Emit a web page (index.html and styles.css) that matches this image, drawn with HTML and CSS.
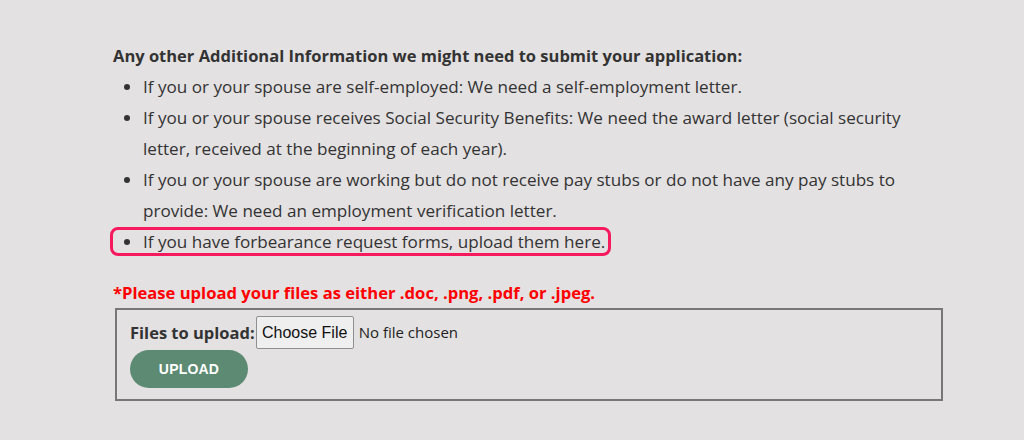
FILE: index.html
```html
<!DOCTYPE html>
<html lang="en">
<head>
<meta charset="utf-8">
<title>Additional Information</title>
<link rel="stylesheet" href="styles.css">
</head>
<body>
<main class="page">
  <p class="heading">Any other Additional Information we might need to submit your application:</p>
  <ul class="list">
    <li>If you or your spouse are self-employed: We need a self-employment letter.</li>
    <li>If you or your spouse receives Social Security Benefits: We need the award letter (social security letter, received at the beginning of each year).</li>
    <li>If you or your spouse are working but do not receive pay stubs or do not have any pay stubs to provide: We need an employment verification letter.</li>
    <li class="highlight">If you have forbearance request forms, upload them here.</li>
  </ul>
  <p class="notice">*Please upload your files as either .doc, .png, .pdf, or .jpeg.</p>
  <form class="upload-box">
    <div class="file-row">
      <span class="file-label">Files to upload:</span>
      <span class="file-btn">Choose File</span>
      <span class="file-status">No file chosen</span>
    </div>
    <button type="button" class="upload-btn">UPLOAD</button>
  </form>
</main>
</body>
</html>
```

FILE: styles.css
```css
html, body {
  margin: 0;
  padding: 0;
  background: #e3e1e2;
}

.page {
  width: 830px;
  padding: 40px 0 0 113px;
  font-family: "Open Sans", Lato, sans-serif;
  font-size: 16.5px;
  line-height: 31px;
  color: #333333;
}

.heading {
  margin: 0;
  font-weight: 700;
}

.list {
  margin: 0;
  padding-left: 30px;
  width: 775px;
  font-size: 17.1px;
}

.list li {
  margin: 0;
}

.highlight {
  position: relative;
  width: fit-content;
}

.highlight::before {
  content: "";
  position: absolute;
  left: -33px;
  right: -6px;
  top: 1px;
  bottom: 1px;
  border: 3px solid #f7195d;
  border-radius: 8px;
}

.notice {
  margin: 20px 0 0;
  color: #ff0000;
  font-weight: 700;
  font-size: 16.6px;
}

.upload-box {
  margin: 0 0 0 2px;
  width: 811px;
  border: 2px solid #777777;
  padding: 6px 0 11px 13px;
  box-sizing: content-box;
}

.file-row {
  display: flex;
  align-items: center;
  height: 33px;
}

.file-label {
  font-weight: 700;
}

.file-btn {
  display: flex;
  align-items: center;
  justify-content: center;
  box-sizing: border-box;
  height: 33px;
  width: 98px;
  margin-left: 1px;
  background: #efefef;
  border: 1px solid #8f8f8f;
  border-radius: 2px;
  font-family: "Liberation Sans", Arial, sans-serif;
  font-size: 16px;
  color: #111111;
}

.file-status {
  margin-left: 5px;
  font-size: 15px;
  color: #222222;
}

.upload-btn {
  display: block;
  margin: 1px 0 0;
  width: 118px;
  height: 38px;
  border: 0;
  border-radius: 19px;
  background: #5d8a73;
  color: #ffffff;
  font-family: "Liberation Sans", Arial, sans-serif;
  font-weight: 700;
  font-size: 14px;
  letter-spacing: 0.2px;
}
```
